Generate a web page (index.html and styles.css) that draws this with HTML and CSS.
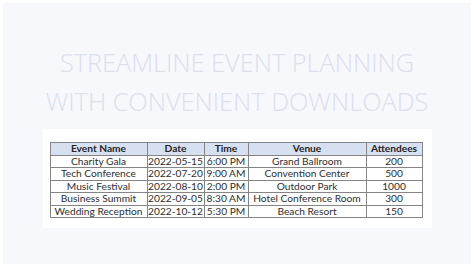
FILE: index.html
```html
<!DOCTYPE html>
<html>
<head>
<meta charset="utf-8">
<link rel="stylesheet" href="styles.css">
</head>
<body>
<div class="panel">
  <h1 class="title">STREAMLINE EVENT PLANNING<br>WITH CONVENIENT DOWNLOADS</h1>
  <div class="card">
    <table class="sheet">
      <colgroup>
        <col class="c1"><col class="c2"><col class="c3"><col class="c4"><col class="c5">
      </colgroup>
      <thead>
        <tr><th>Event Name</th><th>Date</th><th>Time</th><th>Venue</th><th>Attendees</th></tr>
      </thead>
      <tbody>
        <tr><td>Charity Gala</td><td>2022-05-15</td><td>6:00 PM</td><td>Grand Ballroom</td><td>200</td></tr>
        <tr><td>Tech Conference</td><td>2022-07-20</td><td>9:00 AM</td><td>Convention Center</td><td>500</td></tr>
        <tr><td>Music Festival</td><td>2022-08-10</td><td>2:00 PM</td><td>Outdoor Park</td><td>1000</td></tr>
        <tr><td>Business Summit</td><td>2022-09-05</td><td>8:30 AM</td><td>Hotel Conference Room</td><td>300</td></tr>
        <tr><td>Wedding Reception</td><td>2022-10-12</td><td>5:30 PM</td><td>Beach Resort</td><td>150</td></tr>
      </tbody>
    </table>
  </div>
</div>
</body>
</html>
```
FILE: styles.css
```css
html, body { margin: 0; padding: 0; background: #ffffff; }
body { width: 474px; height: 267px; padding: 3px; box-sizing: border-box; }
.panel {
  background: #f7f8fc;
  height: 261px;
  display: flex;
  flex-direction: column;
  align-items: center;
}
.title {
  margin: 40px 0 0;
  font-family: "Open Sans", "Noto Sans", sans-serif;
  font-weight: 300;
  font-size: 25.3px;
  line-height: 39px;
  color: #dae0ec;
  text-align: center;
}
.card {
  margin-top: 8px;
  background: #ffffff;
  padding: 13px 9px 10px 7px;
}
.sheet {
  border-collapse: collapse;
  font-family: "Lato", "Noto Sans", sans-serif;
  font-size: 10.2px;
  color: #2e2e2e;
  table-layout: fixed;
}
.c1 { width: 97px; } .c2 { width: 57px; } .c3 { width: 44px; } .c4 { width: 118px; } .c5 { width: 56px; }
.sheet th, .sheet td {
  border: 1px solid #858585;
  text-align: center;
  padding: 0;
  height: 11.5px;
  line-height: 11.5px;
  white-space: nowrap;
}
.sheet th { background: #d7e0f1; font-weight: bold; color: #262626; }
```
